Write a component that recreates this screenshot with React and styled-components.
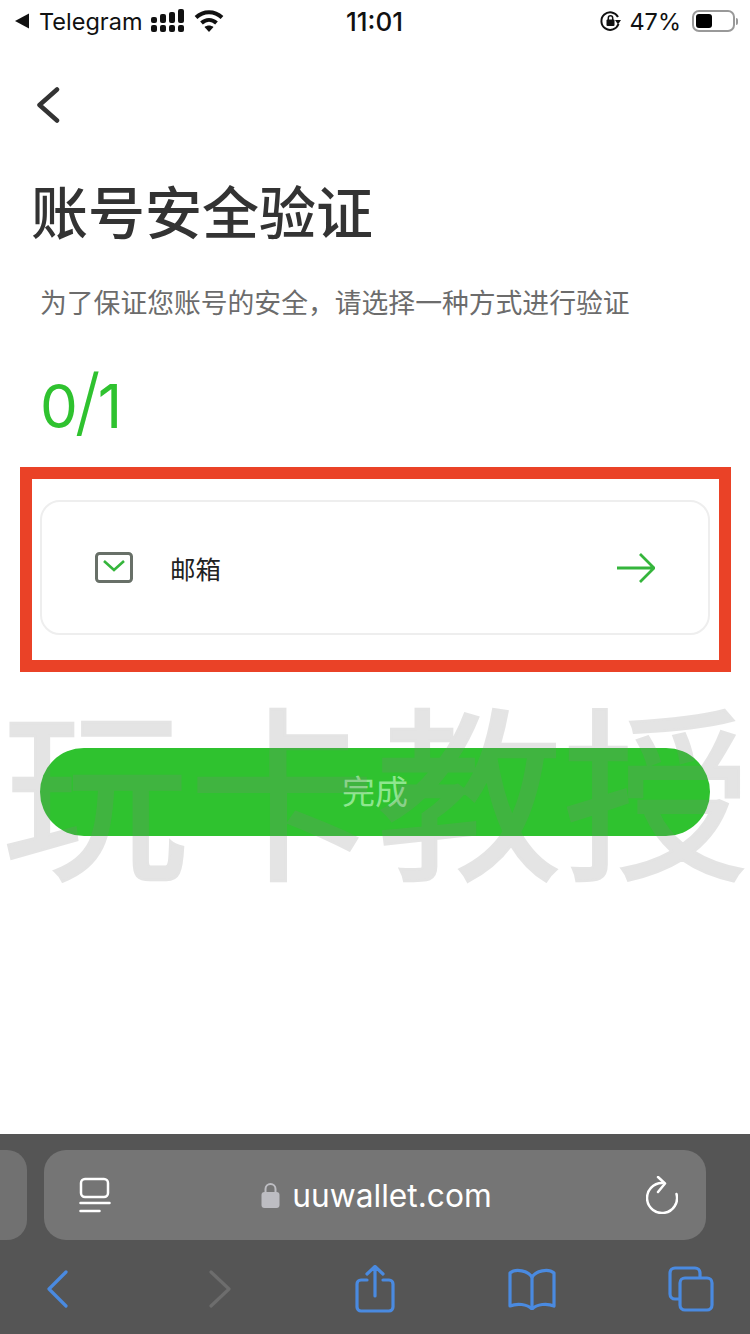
import styled, { createGlobalStyle } from "styled-components";

const CJK = `"Noto Sans CJK SC", "Noto Sans", sans-serif`;
const BLUE = "#4a8ae0";
const GREEN = "#2fc22f";

const steps = [{ id: "email", label: "邮箱" }];

export default function App() {
  return (
    <Page>
      <GlobalStyle />
      <StatusBar>
        <StatusLeft>
          <svg width="16" height="16" viewBox="0 0 16 16">
            <path d="M1 8l14-7.500v15z" fill="#111" />
          </svg>
          <span>Telegram</span>
          <svg width="34" height="24" viewBox="0 0 34 24" fill="#111">
            <rect x="0" y="16" width="6" height="7" rx="2" />
            <rect x="9" y="16" width="6" height="7" rx="2" />
            <rect x="18" y="16" width="6" height="7" rx="2" />
            <rect x="27" y="16" width="6" height="7" rx="2" />
            <rect x="0" y="8" width="6" height="6" rx="2" />
            <rect x="9" y="5" width="6" height="9" rx="2" />
            <rect x="18" y="3" width="6" height="11" rx="2" />
            <rect x="27" y="0" width="6" height="14" rx="2" />
          </svg>
          <svg width="30" height="24" viewBox="0 0 30 24" fill="none" stroke="#111" strokeWidth="4">
            <path d="M2 8.500c7.500-7 18.500-7 26 0" />
            <path d="M7.500 14c4.500-4 10.500-4 15 0" />
            <path d="M15 23l-4.500-5c2.700-2 6.300-2 9 0z" fill="#111" stroke="none" />
          </svg>
        </StatusLeft>
        <Clock>11:01</Clock>
        <StatusRight>
          <svg width="21" height="22" viewBox="0 0 21 22" fill="none">
            <path d="M18.500 14A8.800 8.800 0 1 1 18 7" stroke="#111" strokeWidth="2" />
            <path d="M15 10h6l-3 4.500z" fill="#111" />
            <rect x="6.500" y="9.500" width="8" height="6.500" rx="1" fill="#111" />
            <path d="M8.300 10V8a2.200 2.200 0 0 1 4.400 0v2" stroke="#111" strokeWidth="1.500" />
          </svg>
          <span>47%</span>
          <Battery>
            <BatteryLevel />
          </Battery>
        </StatusRight>
      </StatusBar>

      <Content>
        <BackButton>
          <svg width="24" height="36" viewBox="0 0 24 36" fill="none" stroke="#333" strokeWidth="4.500" strokeLinecap="round" strokeLinejoin="round">
            <path d="M21 2.500L3.500 18 21 33.500" />
          </svg>
        </BackButton>
        <Title>账号安全验证</Title>
        <Subtitle>为了保证您账号的安全&#xFF0C;请选择一种方式进行验证</Subtitle>
        <Progress>
          0<Slash>/</Slash>1
        </Progress>
      </Content>

      <Highlight>
        {steps.map((step) => (
          <MethodCard key={step.id}>
            <MethodInfo>
              <svg width="38" height="31" viewBox="0 0 38 31" fill="none">
                <rect x="1.500" y="1.500" width="35" height="28" rx="3" stroke="#687068" strokeWidth="3" />
                <path d="M9 9l10 9 10-9" stroke="#35b53c" strokeWidth="2.600" />
              </svg>
              <MethodLabel>{step.label}</MethodLabel>
            </MethodInfo>
            <svg width="38" height="32" viewBox="0 0 38 32" fill="none" stroke="#35b53c" strokeWidth="2.800">
              <path d="M0 16h36M23 2l14 14-14 14" />
            </svg>
          </MethodCard>
        ))}
      </Highlight>

      <DoneButton>完成</DoneButton>
      <Watermark>玩卡教授</Watermark>

      <Toolbar>
        <AddressRow>
          <PrevTab />
          <AddressBar>
            <svg width="32" height="36" viewBox="0 0 32 36" fill="none" stroke="#fff" strokeWidth="2.500" strokeLinecap="round">
              <rect x="2" y="2" width="27" height="18" rx="4" />
              <path d="M1.500 26h29M1.500 34h19" />
            </svg>
            <Domain>
              <svg width="19" height="26" viewBox="0 0 19 26" fill="none">
                <path d="M4.500 12V7a5 5 0 0 1 10 0v5" stroke="#bdbdc2" strokeWidth="2" />
                <rect x="0.500" y="10" width="18" height="16" rx="3" fill="#bdbdc2" />
              </svg>
              <DomainText>uuwallet.com</DomainText>
            </Domain>
            <svg width="32" height="38" viewBox="0 0 32 38" fill="none" stroke="#fff" strokeWidth="2.500" strokeLinecap="round" strokeLinejoin="round">
              <path d="M16 7A15 15 0 1 0 30.500 18" />
              <path d="M12 1l7 6.500L12 16" />
            </svg>
          </AddressBar>
        </AddressRow>
        <ToolIcons>
          <svg width="22" height="38" viewBox="0 0 22 38" fill="none" stroke={BLUE} strokeWidth="3.200" strokeLinecap="round" strokeLinejoin="round">
            <path d="M20 2L3 19l17 17" />
          </svg>
          <svg width="22" height="38" viewBox="0 0 22 38" fill="none" stroke="#6d6d6d" strokeWidth="3.200" strokeLinecap="round" strokeLinejoin="round">
            <path d="M2 2l18 17L2 36" />
          </svg>
          <svg width="40" height="48" viewBox="0 0 40 48" fill="none" stroke={BLUE} strokeWidth="3.200" strokeLinecap="round" strokeLinejoin="round">
            <path d="M12 15H6a4 4 0 0 0-4 4v23a4 4 0 0 0 4 4h28a4 4 0 0 0 4-4V19a4 4 0 0 0-4-4h-6" />
            <path d="M20 31V2M12 9l8-7.500L28 9" />
          </svg>
          <svg width="48" height="42" viewBox="0 0 48 42" fill="none" stroke={BLUE} strokeWidth="3.200" strokeLinejoin="round">
            <path d="M24 9C20 3 8 0 2 5v33c7-3 17-2 22 3 5-5 15-6 22-3V5c-6-5-18-2-22 4z" />
            <path d="M24 9v32" />
          </svg>
          <svg width="46" height="46" viewBox="0 0 46 46" fill="none" stroke={BLUE} strokeWidth="3.200">
            <path d="M11 33H7a5 5 0 0 1-5-5V7a5 5 0 0 1 5-5h20a5 5 0 0 1 5 5v5" />
            <rect x="12" y="12" width="32" height="32" rx="5" />
          </svg>
        </ToolIcons>
      </Toolbar>
    </Page>
  );
}

const GlobalStyle = createGlobalStyle`
  html, body {
    background: #fff;
    margin: 0;
    padding: 0;
  }
`;

const Page = styled.div`
  background: #fff;
  display: flex;
  flex-direction: column;
  font-family: ${CJK};
  height: 1334px;
  overflow: hidden;
  position: relative;
  width: 750px;
`;

const StatusBar = styled.header`
  align-items: center;
  color: #111;
  display: grid;
  font-family: "Inter", "Liberation Sans", sans-serif;
  font-size: 23.500px;
  grid-template-columns: 1fr auto 1fr;
  height: 42px;
  padding: 0 15px 0 14px;
`;

const StatusLeft = styled.div`
  align-items: center;
  display: flex;
  gap: 9px;
`;

const Clock = styled.div`
  font-size: 26px;
  font-weight: 500;
`;

const StatusRight = styled.div`
  align-items: center;
  display: flex;
  gap: 8px;
  justify-content: flex-end;
`;

const Battery = styled.div`
  border: 2px solid #999;
  border-radius: 7px;
  box-sizing: border-box;
  height: 22px;
  margin-left: 3px;
  padding: 2px;
  position: relative;
  width: 43px;

  &::after {
    background: #999;
    border-radius: 0 2px 2px 0;
    content: "";
    height: 7px;
    position: absolute;
    right: -5px;
    top: 5.500px;
    width: 2px;
  }
`;

const BatteryLevel = styled.div`
  background: #000;
  border-radius: 3px;
  height: 100%;
  width: 47%;
`;

const Content = styled.section`
  display: flex;
  flex-direction: column;
  padding: 45px 40px 0;
`;

const BackButton = styled.div`
  display: flex;
  height: 36px;
  margin-left: -4px;
`;

const Title = styled.h1`
  color: #333;
  font-size: 57px;
  font-weight: 500;
  line-height: 80px;
  margin: 46px 0 0 -9px;
`;

const Subtitle = styled.p`
  color: #6c6c6c;
  font-size: 26.800px;
  line-height: 40px;
  margin: 33px 0 0;
  white-space: nowrap;
`;

const Progress = styled.div`
  color: ${GREEN};
  font-family: "Inter", "Liberation Sans", sans-serif;
  font-size: 60px;
  font-weight: 400;
  line-height: 70px;
  margin-top: 49px;
`;

const Slash = styled.span`
  font-size: 74px;
  font-weight: 300;
  line-height: 0;
  margin: 0 -3px;
`;

const Highlight = styled.div`
  border: 12px solid #ea4227;
  box-sizing: border-box;
  height: 205px;
  margin: 26px 19px 0 20px;
  padding: 21px 9px 0 8px;
`;

const MethodCard = styled.div`
  align-items: center;
  border: 2px solid #eeeeee;
  border-radius: 20px;
  box-sizing: border-box;
  display: flex;
  height: 135px;
  justify-content: space-between;
  padding: 0 53px;
`;

const MethodInfo = styled.div`
  align-items: center;
  display: flex;
  gap: 37px;
`;

const MethodLabel = styled.span`
  color: #222;
  font-size: 25.500px;
`;

const DoneButton = styled.button`
  background: ${GREEN};
  border: none;
  border-radius: 44px;
  color: #8ee68e;
  font-family: ${CJK};
  font-size: 33px;
  height: 88px;
  margin: 76px 40px 0;
  padding: 0 0 4px;
  width: 670px;
`;

const Watermark = styled.div`
  -webkit-text-stroke: 2.500px #828282;
  color: #828282;
  font-family: ${CJK};
  font-size: 186px;
  left: 2px;
  letter-spacing: 1px;
  line-height: 186px;
  opacity: 0.21;
  pointer-events: none;
  position: absolute;
  top: 692px;
  white-space: nowrap;
`;

const Toolbar = styled.footer`
  background: #555;
  box-sizing: border-box;
  display: flex;
  flex-direction: column;
  height: 200px;
  margin-top: auto;
  padding-top: 16px;
`;

const AddressRow = styled.div`
  display: grid;
  gap: 17px;
  grid-template-columns: 27px 662px;
  height: 90px;
`;

const PrevTab = styled.div`
  background: #717171;
  border-radius: 0 20px 20px 0;
`;

const AddressBar = styled.div`
  align-items: center;
  background: #757575;
  border-radius: 22px;
  display: flex;
  justify-content: space-between;
  padding: 0 28px 0 35px;
`;

const Domain = styled.div`
  align-items: center;
  display: flex;
  gap: 12px;
  margin-right: 4px;
`;

const DomainText = styled.span`
  color: #fff;
  font-family: "Inter", "Liberation Sans", sans-serif;
  font-size: 31.700px;
`;

const ToolIcons = styled.nav`
  align-items: center;
  display: grid;
  grid-template-columns: 163px 146px 153px 160px auto;
  margin-top: 25px;
  padding-left: 46px;
`;
